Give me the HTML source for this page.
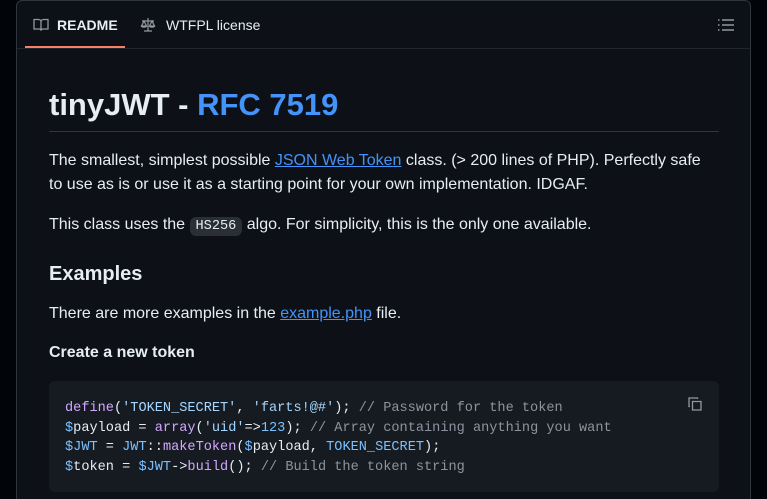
<!DOCTYPE html>
<html><head><meta charset="utf-8"><style>
*{margin:0;padding:0;box-sizing:border-box}
html,body{width:767px;height:499px;overflow:hidden}
body{background:#010409;font-family:"Liberation Sans",sans-serif;color:#e6edf3;position:relative}
.panel{position:absolute;left:16px;top:0;width:735px;height:520px;background:#0d1117;border:1px solid #30363d;border-radius:6px}
.hdr{position:absolute;left:0;top:0;right:0;height:48px;border-bottom:1px solid #21262d}
.tab{position:absolute;top:0;height:48px;display:flex;align-items:center;font-size:14px}
.ul{position:absolute;left:8px;top:45px;width:100px;height:2px;background:#f78166}
.abs{position:absolute;white-space:nowrap}
a{color:#4493f8;text-decoration:underline}
p{font-size:16px;line-height:24px}
code{font-family:"Liberation Mono",monospace;font-size:13.6px;background:#2a2f37;border-radius:6px;padding:2px 6px}
.code{position:absolute;left:32px;top:380px;width:670px;height:111px;background:#161b22;border-radius:6px}
.code pre{position:absolute;left:16px;top:18px;font-family:"Liberation Mono",monospace;font-size:13.6px;line-height:19.6px;color:#e6edf3}
.k{color:#d2a8ff}.s{color:#a5d6ff}.v{color:#79c0ff}.c{color:#8b949e}
</style></head><body>
<div class="panel">
 <div class="hdr">
  <div class="tab" style="left:16px;font-weight:bold">
   <svg width="16" height="16" viewBox="0 0 16 16" style="margin-right:8px"><path fill="none" stroke="#9198a1" stroke-width="1.3" d="M1 2.5h4.5c1.4 0 2.5 1 2.5 2.3v9c0-1-.9-1.8-2-1.8H1zM15 2.5h-4.5C9.1 2.5 8 3.5 8 4.8v9c0-1 .9-1.8 2-1.8h5z"/></svg>README</div>
  <div class="tab" style="left:123px">
   <svg width="16" height="16" viewBox="0 0 16 16" style="margin-right:10px"><path fill="none" stroke="#9198a1" stroke-width="1.2" d="M8 1v13M4 14h8M2 4h12M4 4l-2.5 5h5zM12 4l-2.5 5h5zM1.5 9c0 1.5 5 1.5 5 0M9.5 9c0 1.5 5 1.5 5 0"/></svg>WTFPL license</div>
  <div class="ul"></div>
  <svg class="abs" style="left:701px;top:17px" width="16" height="14" viewBox="0 0 16 14"><path stroke="#9198a1" stroke-width="1.5" d="M0 2h1.5M0 7h1.5M0 12h1.5M4 2h12M4 7h12M4 12h12"/></svg>
 </div>
 <div class="abs" style="left:32px;top:84px;font-size:31px;font-weight:bold;line-height:40px">tinyJWT - <span style="color:#4493f8">RFC 7519</span></div>
 <div class="abs" style="left:32px;top:130px;width:670px;height:1px;background:#30363d"></div>
 <p class="abs" style="left:32px;top:148px">The smallest, simplest possible <a>JSON Web Token</a> class. (&gt; 200 lines of PHP). Perfectly safe<br>to use as is or use it as a starting point for your own implementation. IDGAF.</p>
 <p class="abs" style="left:32px;top:212px">This class uses the <code>HS256</code> algo. For simplicity, this is the only one available.</p>
 <div class="abs" style="left:32px;top:261px;font-size:20px;font-weight:bold;line-height:25px">Examples</div>
 <p class="abs" style="left:32px;top:301px">There are more examples in the <a>example.php</a> file.</p>
 <div class="abs" style="left:32px;top:343px;font-size:16px;font-weight:bold">Create a new token</div>
 <div class="code"><pre><span class="k">define</span>(<span class="s">'TOKEN_SECRET'</span>, <span class="s">'farts!@#'</span>); <span class="c">// Password for the token</span>
<span class="v">$</span>payload = <span class="k">array</span>(<span class="s">'uid'</span>=&gt;<span class="v">123</span>); <span class="c">// Array containing anything you want</span>
<span class="v">$JWT</span> = <span class="v">JWT</span>::<span class="k">makeToken</span>(<span class="v">$</span>payload, <span class="v">TOKEN_SECRET</span>);
<span class="v">$</span>token = <span class="v">$JWT</span>-&gt;<span class="k">build</span>(); <span class="c">// Build the token string</span></pre>
 <svg class="abs" style="left:638px;top:15px" width="16" height="16" viewBox="0 0 16 16"><path fill="none" stroke="#9198a1" stroke-width="1.3" d="M5.5 5.5h8.5v8.5H5.5zM3 10.5H2V2h8.5v1"/></svg>
 </div>
</div>
</body></html>
